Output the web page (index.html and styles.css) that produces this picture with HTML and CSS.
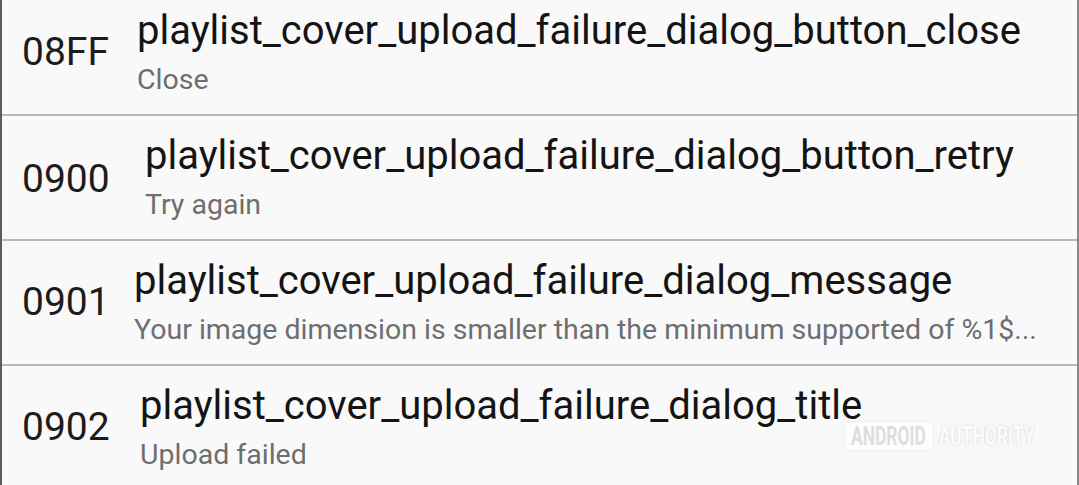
FILE: index.html
```html
<!DOCTYPE html>
<html>
<head>
<meta charset="utf-8">
<link rel="stylesheet" href="styles.css">
</head>
<body>
<div class="list">
  <div class="row">
    <div class="code code-08ff">08FF</div>
    <div class="text">
      <div class="title">playlist_cover_upload_failure_dialog_button_close</div>
      <div class="sub">Close</div>
    </div>
  </div>
  <div class="row">
    <div class="code code-0900">0900</div>
    <div class="text">
      <div class="title">playlist_cover_upload_failure_dialog_button_retry</div>
      <div class="sub">Try again</div>
    </div>
  </div>
  <div class="row">
    <div class="code code-0901">0901</div>
    <div class="text">
      <div class="title">playlist_cover_upload_failure_dialog_message</div>
      <div class="sub">Your image dimension is smaller than the minimum supported of %1$...</div>
    </div>
  </div>
  <div class="row last">
    <div class="code code-0902">0902</div>
    <div class="text">
      <div class="title">playlist_cover_upload_failure_dialog_title</div>
      <div class="sub">Upload failed</div>
    </div>
  </div>
</div>
<div class="watermark"><span class="wm-a">ANDROID</span><span class="wm-b">AUTHORITY</span></div>
</body>
</html>
```
FILE: styles.css
```css
html, body {
  margin: 0;
  padding: 0;
  background: #f9f9f9;
  overflow: hidden;
  height: 485px;
}
body {
  font-family: Roboto, "Noto Sans", sans-serif;
  position: relative;
}
.list {
  margin-top: -9px;
  border-left: 2px solid #5c5c5c;
  border-right: 2px solid #8a8a8a;
  width: 1075px;
  height: 494px;
  overflow: hidden;
  background: #f9f9f9;
}
.row {
  display: flex;
  align-items: center;
  height: 123px;
  border-bottom: 2px solid #b9b9b9;
  padding-left: 20px;
  gap: 27px;
}
.row.last { border-bottom: none; }
.code {
  font-size: 39px;
  color: #1c1c1c;
  line-height: 1;
  white-space: nowrap;
}
.code-08ff { width: 88px; }
.code-0900 { width: 96px; margin-top: 4px; }
.code-0901 { width: 85px; }
.code-0902 { width: 91px; }
.text {
  display: flex;
  flex-direction: column;
}
.title {
  font-size: 40px;
  color: #141414;
  line-height: 46px;
  white-space: nowrap;
}
.sub {
  font-size: 28.5px;
  color: #6e6e6e;
  line-height: 36px;
  margin-top: 8px;
  white-space: nowrap;
}
.watermark {
  position: absolute;
  left: 845px;
  top: 423px;
  display: flex;
  align-items: center;
  font-family: Roboto, sans-serif;
  font-weight: bold;
  font-size: 26px;
  transform: scaleX(0.67);
  transform-origin: left center;
}
.wm-a {
  background: #fdfdfd;
  color: #dedede;
  padding: 0 9px;
  line-height: 26px;
  box-shadow: 0 0 8px rgba(0,0,0,0.05);
}
.wm-b {
  color: #fbfbfb;
  padding: 0 10px;
  line-height: 26px;
  text-shadow: 0 0 4px rgba(0,0,0,0.14);
}
```
